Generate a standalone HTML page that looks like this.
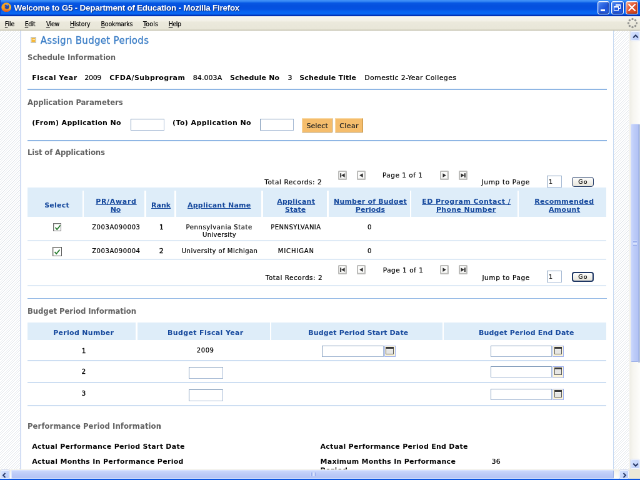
<!DOCTYPE html>
<html lang="en"><head><meta charset="utf-8"><title>Welcome to G5 - Department of Education - Mozilla Firefox</title>
<style>
html,body{margin:0;padding:0;background:#fff;overflow:hidden;}
body{width:640px;height:480px;position:relative;}
#w{position:absolute;left:0;top:0;width:1024px;height:768px;transform:scale(.625);transform-origin:0 0;font-family:"DejaVu Sans","Liberation Sans",sans-serif;font-size:11px;overflow:hidden;background:#fff;will-change:transform;}
.t{position:absolute;white-space:nowrap;line-height:16px;height:16px;}
.l{font-family:"Liberation Sans","DejaVu Sans",sans-serif;}
.c{font-family:"DejaVu Sans Condensed","DejaVu Sans","Liberation Sans",sans-serif;}
.n{-webkit-text-stroke:.22px currentColor;}
.m::first-letter{text-decoration:underline;}
.b{position:absolute;box-sizing:border-box;}
svg{position:absolute;overflow:visible;}
</style></head>
<body><div id="w">
<div class="b" style="left:48.5px;top:58.9px;width:9.3px;height:10.1px;background:#f6b83a;border:1.500px solid #a6c2ee;box-shadow:inset 0 0 0 1px #f8cf78;"><div class="b" style="left:2px;top:3px;width:4px;height:1.500px;background:#fdf0cf"></div></div>
<div class="b" style="left:44.0px;top:142.4px;width:926.9px;height:1.5px;background:#8fb6e4;"></div>
<div class="b" style="left:44.0px;top:224.0px;width:926.9px;height:1.5px;background:#8fb6e4;"></div>
<div class="b" style="left:44.0px;top:476.5px;width:926.9px;height:1.5px;background:#8fb6e4;"></div>
<div class="b" style="left:208.8px;top:190.1px;width:54.4px;height:18.9px;background:#fff;border:1.500px solid;border-color:#7d98b8 #a5b9d4 #a5b9d4 #7d98b8;"></div>
<div class="b" style="left:416.0px;top:190.1px;width:54.1px;height:18.9px;background:#fff;border:1.500px solid;border-color:#7d98b8 #a5b9d4 #a5b9d4 #7d98b8;"></div>
<div class="b" style="left:483.2px;top:189.1px;width:49.0px;height:23.0px;background:#f5bd6c;border:1.500px solid;border-color:#f9dba8 #b98a40 #b98a40 #f9dba8;"></div>
<div class="b" style="left:536.3px;top:189.1px;width:44.8px;height:23.0px;background:#f5bd6c;border:1.500px solid;border-color:#f9dba8 #b98a40 #b98a40 #f9dba8;"></div>
<div class="b" style="left:44.0px;top:299.8px;width:926.2px;height:47.0px;background:#deedf9;"></div>
<div class="b" style="left:132.2px;top:305.0px;width:2.2px;height:41.9px;background:#fff;"></div>
<div class="b" style="left:230.7px;top:305.0px;width:2.9px;height:41.9px;background:#fff;"></div>
<div class="b" style="left:279.0px;top:305.0px;width:2.6px;height:41.9px;background:#fff;"></div>
<div class="b" style="left:417.6px;top:305.0px;width:3.2px;height:41.9px;background:#fff;"></div>
<div class="b" style="left:523.2px;top:305.0px;width:2.6px;height:41.9px;background:#fff;"></div>
<div class="b" style="left:656.3px;top:305.0px;width:2.2px;height:41.9px;background:#fff;"></div>
<div class="b" style="left:828.2px;top:305.0px;width:2.2px;height:41.9px;background:#fff;"></div>
<div class="b" style="left:44.0px;top:384.2px;width:926.2px;height:2.2px;background:#deeaf6;"></div>
<div class="b" style="left:44.0px;top:414.2px;width:926.2px;height:2.2px;background:#deeaf6;"></div>
<div class="b" style="left:44.0px;top:455.8px;width:926.2px;height:2.2px;background:#deeaf6;"></div>
<div class="b" style="left:84.8px;top:356.8px;width:13.1px;height:13.1px;background:#fff;border:1px solid #6f6f6f;box-shadow:inset 1px 1px 0 #c9c9c2;"><svg style="left:1px;top:1px" width="11" height="11" viewBox="0 0 11 11"><path d="M1.500 5l2.700 3.200L9.500 1.500" fill="none" stroke="#1f7726" stroke-width="1.800"/></svg></div>
<div class="b" style="left:83.7px;top:395.0px;width:15.0px;height:15.0px;background:#fff;border:1.5px solid #585858;box-shadow:inset 1px 1px 0 #c9c9c2;"><svg style="left:1.5px;top:1.5px" width="11" height="11" viewBox="0 0 11 11"><path d="M1.500 5l2.700 3.200L9.500 1.500" fill="none" stroke="#1f7726" stroke-width="1.800"/></svg></div>
<div class="b" style="left:541.0px;top:272.6px;width:14.1px;height:15.2px;background:#fbfbfa;border:2px solid #bcbcba;border-radius:1.500px;box-shadow:inset -1px -1px 0 #e4e4e2;"><svg style="left:-2px;top:-2px" width="14" height="15" viewBox="0 0 14 15" fill="#2e2e2e"><path d="M3.200 4.200h1.900v6.800h-1.900z"/><path d="M10.600 4.200v6.800l-5.400-3.400z"/></svg></div>
<div class="b" style="left:571.2px;top:272.6px;width:14.1px;height:15.2px;background:#fbfbfa;border:2px solid #bcbcba;border-radius:1.500px;box-shadow:inset -1px -1px 0 #e4e4e2;"><svg style="left:-2px;top:-2px" width="14" height="15" viewBox="0 0 14 15" fill="#2e2e2e"><path d="M9.600 4.200v6.800l-5.400-3.400z"/></svg></div>
<div class="b" style="left:704.3px;top:272.6px;width:14.1px;height:15.2px;background:#fbfbfa;border:2px solid #bcbcba;border-radius:1.500px;box-shadow:inset -1px -1px 0 #e4e4e2;"><svg style="left:-2px;top:-2px" width="14" height="15" viewBox="0 0 14 15" fill="#2e2e2e"><path d="M4.400 4.200v6.800l5.400-3.400z"/></svg></div>
<div class="b" style="left:734.4px;top:272.6px;width:14.1px;height:15.2px;background:#fbfbfa;border:2px solid #bcbcba;border-radius:1.500px;box-shadow:inset -1px -1px 0 #e4e4e2;"><svg style="left:-2px;top:-2px" width="14" height="15" viewBox="0 0 14 15" fill="#2e2e2e"><path d="M3.400 4.200v6.800l5.400-3.400z"/><path d="M8.900 4.200h1.900v6.800h-1.900z"/></svg></div>
<div class="b" style="left:874.9px;top:281.3px;width:23.7px;height:18.9px;background:#fff;border:1.500px solid;border-color:#7d98b8 #a5b9d4 #a5b9d4 #7d98b8;"></div>
<div class="b" style="left:915.0px;top:282.9px;width:35.0px;height:16.2px;background:linear-gradient(#fefefd,#e6e4da);border:1.5px solid #1d3664;border-radius:4px;"></div>
<div class="b" style="left:541.0px;top:424.3px;width:14.1px;height:15.2px;background:#fbfbfa;border:2px solid #bcbcba;border-radius:1.500px;box-shadow:inset -1px -1px 0 #e4e4e2;"><svg style="left:-2px;top:-2px" width="14" height="15" viewBox="0 0 14 15" fill="#2e2e2e"><path d="M3.200 4.200h1.900v6.800h-1.900z"/><path d="M10.600 4.200v6.800l-5.400-3.400z"/></svg></div>
<div class="b" style="left:571.2px;top:424.3px;width:14.1px;height:15.2px;background:#fbfbfa;border:2px solid #bcbcba;border-radius:1.500px;box-shadow:inset -1px -1px 0 #e4e4e2;"><svg style="left:-2px;top:-2px" width="14" height="15" viewBox="0 0 14 15" fill="#2e2e2e"><path d="M9.600 4.200v6.800l-5.400-3.400z"/></svg></div>
<div class="b" style="left:704.3px;top:424.3px;width:14.1px;height:15.2px;background:#fbfbfa;border:2px solid #bcbcba;border-radius:1.500px;box-shadow:inset -1px -1px 0 #e4e4e2;"><svg style="left:-2px;top:-2px" width="14" height="15" viewBox="0 0 14 15" fill="#2e2e2e"><path d="M4.400 4.200v6.800l5.400-3.400z"/></svg></div>
<div class="b" style="left:734.4px;top:424.3px;width:14.1px;height:15.2px;background:#fbfbfa;border:2px solid #bcbcba;border-radius:1.500px;box-shadow:inset -1px -1px 0 #e4e4e2;"><svg style="left:-2px;top:-2px" width="14" height="15" viewBox="0 0 14 15" fill="#2e2e2e"><path d="M3.400 4.200v6.800l5.400-3.400z"/><path d="M8.900 4.200h1.900v6.800h-1.900z"/></svg></div>
<div class="b" style="left:874.9px;top:433.0px;width:23.7px;height:18.9px;background:#fff;border:1.500px solid;border-color:#7d98b8 #a5b9d4 #a5b9d4 #7d98b8;"></div>
<div class="b" style="left:915.0px;top:434.6px;width:35.0px;height:16.2px;background:linear-gradient(#fefefd,#e6e4da);border:2px solid #1d3664;border-radius:4px;"></div>
<div class="b" style="left:44.0px;top:515.8px;width:173.0px;height:27.8px;background:#deedf9;"></div>
<div class="b" style="left:219.5px;top:515.8px;width:212.5px;height:27.8px;background:#deedf9;"></div>
<div class="b" style="left:434.2px;top:515.8px;width:273.6px;height:27.8px;background:#deedf9;"></div>
<div class="b" style="left:710.4px;top:515.8px;width:259.8px;height:27.8px;background:#deedf9;"></div>
<div class="b" style="left:44.0px;top:576.0px;width:926.2px;height:1.8px;background:#cddef2;"></div>
<div class="b" style="left:44.0px;top:610.9px;width:926.2px;height:1.8px;background:#cddef2;"></div>
<div class="b" style="left:44.0px;top:648.2px;width:926.2px;height:1.8px;background:#cddef2;"></div>
<div class="b" style="left:302.1px;top:587.2px;width:54.7px;height:18.9px;background:#fff;border:1.500px solid;border-color:#7d98b8 #a5b9d4 #a5b9d4 #7d98b8;"></div>
<div class="b" style="left:302.1px;top:622.9px;width:54.7px;height:19.0px;background:#fff;border:1.500px solid;border-color:#7d98b8 #a5b9d4 #a5b9d4 #7d98b8;"></div>
<div class="b" style="left:515.2px;top:552.8px;width:98.9px;height:18.2px;background:#fff;border:1.500px solid;border-color:#7d98b8 #a5b9d4 #a5b9d4 #7d98b8;"></div>
<div class="b" style="left:614.9px;top:552.8px;width:18.2px;height:18.4px;background:#fbf4d9;border:1.500px solid #9db0ee;"><div class="b" style="left:1.500px;top:1px;width:12.500px;height:3px;background:#3a3a3a"></div><div class="b" style="left:1.500px;top:4px;width:12.500px;height:9px;background:#e6e6e4;border:1.500px solid #5a5a5a;border-top:0;box-shadow:inset 0 1px 0 #fff"></div></div>
<div class="b" style="left:784.5px;top:552.6px;width:98.7px;height:18.2px;background:#fff;border:1.500px solid;border-color:#7d98b8 #a5b9d4 #a5b9d4 #7d98b8;"></div>
<div class="b" style="left:884.2px;top:552.6px;width:18.2px;height:18.4px;background:#fbf4d9;border:1.500px solid #9db0ee;"><div class="b" style="left:1.500px;top:1px;width:12.500px;height:3px;background:#3a3a3a"></div><div class="b" style="left:1.500px;top:4px;width:12.500px;height:9px;background:#e6e6e4;border:1.500px solid #5a5a5a;border-top:0;box-shadow:inset 0 1px 0 #fff"></div></div>
<div class="b" style="left:784.5px;top:586.2px;width:98.7px;height:18.2px;background:#fff;border:1.500px solid;border-color:#7d98b8 #a5b9d4 #a5b9d4 #7d98b8;"></div>
<div class="b" style="left:884.2px;top:586.2px;width:18.2px;height:18.4px;background:#fbf4d9;border:1.500px solid #9db0ee;"><div class="b" style="left:1.500px;top:1px;width:12.500px;height:3px;background:#3a3a3a"></div><div class="b" style="left:1.500px;top:4px;width:12.500px;height:9px;background:#e6e6e4;border:1.500px solid #5a5a5a;border-top:0;box-shadow:inset 0 1px 0 #fff"></div></div>
<div class="b" style="left:784.5px;top:622.1px;width:98.7px;height:18.2px;background:#fff;border:1.500px solid;border-color:#7d98b8 #a5b9d4 #a5b9d4 #7d98b8;"></div>
<div class="b" style="left:884.2px;top:622.1px;width:18.2px;height:18.4px;background:#fbf4d9;border:1.500px solid #9db0ee;"><div class="b" style="left:1.500px;top:1px;width:12.500px;height:3px;background:#3a3a3a"></div><div class="b" style="left:1.500px;top:4px;width:12.500px;height:9px;background:#e6e6e4;border:1.500px solid #5a5a5a;border-top:0;box-shadow:inset 0 1px 0 #fff"></div></div>
<span class="t" style="left:64.8px;top:57.3px;font-size:15px;color:#3a7dc6;letter-spacing:0.30px;-webkit-text-stroke:.3px #3a7dc6;">Assign Budget Periods</span>
<span class="t c" style="left:44.0px;top:84.0px;font-size:13px;color:#636363;font-weight:bold;letter-spacing:-0.04px;">Schedule Information</span>
<span class="t" style="left:51.2px;top:116.5px;font-size:11px;color:#000;font-weight:bold;letter-spacing:0.54px;">Fiscal Year</span>
<span class="t n" style="left:135.2px;top:116.5px;font-size:11px;color:#000;letter-spacing:-0.27px;">2009</span>
<span class="t" style="left:175.2px;top:116.5px;font-size:11px;color:#000;font-weight:bold;letter-spacing:0.49px;">CFDA/Subprogram</span>
<span class="t n" style="left:308.8px;top:116.5px;font-size:11px;color:#000;letter-spacing:0.06px;">84.003A</span>
<span class="t" style="left:368.0px;top:116.5px;font-size:11px;color:#000;font-weight:bold;letter-spacing:0.19px;">Schedule No</span>
<span class="t n" style="left:460.5px;top:116.5px;font-size:11px;color:#000;">3</span>
<span class="t" style="left:479.2px;top:116.5px;font-size:11px;color:#000;font-weight:bold;letter-spacing:0.19px;">Schedule Title</span>
<span class="t n" style="left:583.2px;top:116.5px;font-size:11px;color:#000;letter-spacing:0.36px;">Domestic 2-Year Colleges</span>
<span class="t c" style="left:44.0px;top:156.2px;font-size:13px;color:#636363;font-weight:bold;letter-spacing:-0.10px;">Application Parameters</span>
<span class="t" style="left:51.2px;top:189.0px;font-size:11px;color:#000;font-weight:bold;letter-spacing:0.32px;">(From) Application No</span>
<span class="t" style="left:276.0px;top:189.0px;font-size:11px;color:#000;font-weight:bold;letter-spacing:0.41px;">(To) Application No</span>
<span class="t n" style="left:490.4px;top:193.8px;font-size:11px;color:#222;letter-spacing:0.09px;">Select</span>
<span class="t n" style="left:543.2px;top:193.8px;font-size:11px;color:#222;letter-spacing:0.40px;">Clear</span>
<span class="t c" style="left:44.0px;top:236.2px;font-size:13px;color:#636363;font-weight:bold;letter-spacing:-0.15px;">List of Applications</span>
<span class="t n" style="left:423.2px;top:283.4px;font-size:10.5px;color:#000;letter-spacing:0.56px;">Total Records: 2</span>
<span class="t n" style="left:612.0px;top:272.0px;font-size:10.5px;color:#000;letter-spacing:0.51px;">Page 1 of 1</span>
<span class="t n" style="left:770.6px;top:283.4px;font-size:10.5px;color:#000;letter-spacing:0.67px;">Jump to Page</span>
<span class="t n" style="left:878.1px;top:282.9px;font-size:9.5px;color:#000;">1</span>
<span class="t n" style="left:925.3px;top:283.2px;font-size:9.5px;color:#000;letter-spacing:1.05px;">Go</span>
<span class="t n" style="left:424.8px;top:435.8px;font-size:10.5px;color:#000;letter-spacing:0.51px;">Total Records: 2</span>
<span class="t n" style="left:612.8px;top:423.7px;font-size:10.5px;color:#000;letter-spacing:0.51px;">Page 1 of 1</span>
<span class="t n" style="left:771.4px;top:435.8px;font-size:10.5px;color:#000;letter-spacing:0.60px;">Jump to Page</span>
<span class="t n" style="left:878.1px;top:434.6px;font-size:9.5px;color:#000;">1</span>
<span class="t n" style="left:925.3px;top:434.9px;font-size:9.5px;color:#000;letter-spacing:1.05px;">Go</span>
<span class="t" style="left:71.2px;top:321.0px;font-size:11px;color:#14479c;font-weight:bold;letter-spacing:0.24px;">Select</span>
<span class="t" style="left:153.2px;top:314.9px;font-size:11px;color:#14479c;font-weight:bold;letter-spacing:0.69px;text-decoration:underline;">PR/Award</span>
<span class="t" style="left:176.8px;top:327.8px;font-size:11px;color:#14479c;font-weight:bold;letter-spacing:-0.37px;text-decoration:underline;">No</span>
<span class="t" style="left:242.0px;top:321.0px;font-size:11px;color:#14479c;font-weight:bold;letter-spacing:0.05px;text-decoration:underline;">Rank</span>
<span class="t" style="left:300.0px;top:321.0px;font-size:11px;color:#14479c;font-weight:bold;letter-spacing:0.23px;text-decoration:underline;">Applicant Name</span>
<span class="t" style="left:443.2px;top:314.9px;font-size:11px;color:#14479c;font-weight:bold;letter-spacing:0.24px;text-decoration:underline;">Applicant</span>
<span class="t" style="left:456.0px;top:327.8px;font-size:11px;color:#14479c;font-weight:bold;letter-spacing:-0.03px;text-decoration:underline;">State</span>
<span class="t" style="left:534.0px;top:314.9px;font-size:11px;color:#14479c;font-weight:bold;letter-spacing:0.19px;text-decoration:underline;">Number of Budget</span>
<span class="t" style="left:568.8px;top:327.8px;font-size:11px;color:#14479c;font-weight:bold;letter-spacing:0.08px;text-decoration:underline;">Periods</span>
<span class="t" style="left:675.2px;top:314.9px;font-size:11px;color:#14479c;font-weight:bold;letter-spacing:0.44px;text-decoration:underline;">ED Program Contact /</span>
<span class="t" style="left:698.0px;top:327.8px;font-size:11px;color:#14479c;font-weight:bold;letter-spacing:0.31px;text-decoration:underline;">Phone Number</span>
<span class="t" style="left:855.2px;top:314.9px;font-size:11px;color:#14479c;font-weight:bold;letter-spacing:0.34px;text-decoration:underline;">Recommended</span>
<span class="t" style="left:878.0px;top:327.8px;font-size:11px;color:#14479c;font-weight:bold;letter-spacing:0.31px;text-decoration:underline;">Amount</span>
<span class="t n" style="left:147.2px;top:356.2px;font-size:10px;color:#000;letter-spacing:0.58px;">Z003A090003</span>
<span class="t n" style="left:254.9px;top:355.4px;font-size:10.5px;color:#000;-webkit-text-stroke:.4px #000;">1</span>
<span class="t n" style="left:297.6px;top:355.8px;font-size:10px;color:#000;letter-spacing:0.60px;">Pennsylvania State</span>
<span class="t n" style="left:324.0px;top:367.8px;font-size:10px;color:#000;letter-spacing:0.35px;">University</span>
<span class="t n" style="left:433.2px;top:356.2px;font-size:10px;color:#000;letter-spacing:0.49px;">PENNSYLVANIA</span>
<span class="t n" style="left:588.0px;top:356.2px;font-size:10px;color:#000;">0</span>
<span class="t n" style="left:147.2px;top:394.2px;font-size:10px;color:#000;letter-spacing:0.58px;">Z003A090004</span>
<span class="t n" style="left:254.9px;top:393.4px;font-size:10.5px;color:#000;-webkit-text-stroke:.4px #000;">2</span>
<span class="t n" style="left:290.8px;top:394.2px;font-size:10px;color:#000;letter-spacing:0.47px;">University of Michigan</span>
<span class="t n" style="left:444.8px;top:394.2px;font-size:10px;color:#000;letter-spacing:0.87px;">MICHIGAN</span>
<span class="t n" style="left:588.0px;top:394.2px;font-size:10px;color:#000;">0</span>
<span class="t c" style="left:44.0px;top:490.2px;font-size:13px;color:#636363;font-weight:bold;letter-spacing:-0.08px;">Budget Period Information</span>
<span class="t" style="left:85.2px;top:525.0px;font-size:11px;color:#14479c;font-weight:bold;letter-spacing:0.30px;">Period Number</span>
<span class="t" style="left:268.0px;top:525.0px;font-size:11px;color:#14479c;font-weight:bold;letter-spacing:0.36px;">Budget Fiscal Year</span>
<span class="t" style="left:493.2px;top:525.0px;font-size:11px;color:#14479c;font-weight:bold;letter-spacing:0.14px;">Budget Period Start Date</span>
<span class="t" style="left:766.0px;top:525.0px;font-size:11px;color:#14479c;font-weight:bold;letter-spacing:0.17px;">Budget Period End Date</span>
<span class="t n" style="left:130.7px;top:552.6px;font-size:10.5px;color:#000;-webkit-text-stroke:.4px #000;">1</span>
<span class="t n" style="left:130.4px;top:585.8px;font-size:10.5px;color:#000;-webkit-text-stroke:.4px #000;">2</span>
<span class="t n" style="left:130.4px;top:621.0px;font-size:10.5px;color:#000;-webkit-text-stroke:.4px #000;">3</span>
<span class="t n" style="left:314.8px;top:553.0px;font-size:10px;color:#000;letter-spacing:0.58px;">2009</span>
<span class="t c" style="left:44.0px;top:674.2px;font-size:13px;color:#636363;font-weight:bold;letter-spacing:0.04px;">Performance Period Information</span>
<span class="t" style="left:51.2px;top:707.4px;font-size:11px;color:#000;font-weight:bold;letter-spacing:0.27px;">Actual Performance Period Start Date</span>
<span class="t" style="left:51.2px;top:731.4px;font-size:11px;color:#000;font-weight:bold;letter-spacing:0.30px;">Actual Months In Performance Period</span>
<span class="t" style="left:512.5px;top:707.4px;font-size:11px;color:#000;font-weight:bold;letter-spacing:0.28px;">Actual Performance Period End Date</span>
<span class="t" style="left:512.5px;top:731.4px;font-size:11px;color:#000;font-weight:bold;letter-spacing:0.27px;">Maximum Months In Performance</span>
<span class="t" style="left:512.5px;top:745.3px;font-size:11px;color:#000;font-weight:bold;letter-spacing:0.67px;">Period</span>
<span class="t n" style="left:786.4px;top:731.4px;font-size:11px;color:#000;letter-spacing:0.40px;">36</span>
<div class="b" style="left:0.0px;top:0.0px;width:1024.0px;height:26.1px;background:linear-gradient(#3f90f7 0%,#3a8bf5 7%,#1a6eec 13%,#0756e2 21%,#0450de 36%,#0452e2 58%,#0760ee 67%,#0868f4 84%,#0659e4 89%,#0232b6 94%,#0232b6 100%);"></div>
<div class="b" style="left:0.0px;top:0.0px;width:1.1px;height:26.1px;background:#0b3fc4;"></div>
<svg style="left:1.9px;top:3.7px" width="16.3" height="15.4" viewBox="0 0 16 15"><defs><linearGradient id="fx" x1="0" y1="0" x2="1" y2="1"><stop offset="0" stop-color="#f59a1e"/><stop offset=".45" stop-color="#f6a623"/><stop offset=".75" stop-color="#f4c23a"/><stop offset="1" stop-color="#e8b030"/></linearGradient><linearGradient id="fb" x1="0" y1="0" x2="0" y2="1"><stop offset=".55" stop-color="#e6541c" stop-opacity="0"/><stop offset="1" stop-color="#d8401a"/></linearGradient></defs><ellipse cx="8" cy="7.500" rx="7.700" ry="7.200" fill="url(#fx)"/><ellipse cx="8" cy="7.500" rx="7.700" ry="7.200" fill="url(#fb)"/><circle cx="8.800" cy="6.600" r="3.700" fill="#2448a8"/><path d="M7 3.200a3.700 3.700 0 0 1 4.600 1.200c-1-.3-1.800 0-2.400.8-.8-.9-1.600-1.500-2.200-2z" fill="#6fa0ea"/><path d="M4.800 6.200c.6-.5 1.400-.7 2.300-.5-1 .6-1.400 1.500-1.200 2.500.3 1.300 1.500 2.200 3 2.300 1.300.1 2.500-.5 3.300-1.500-.4 2-2.200 3.300-4.300 3.200-2.200-.1-3.900-1.700-4-3.700 0-.9.300-1.700.9-2.300z" fill="#f08a1e"/></svg>
<div class="b" style="left:955.7px;top:2.4px;width:19.2px;height:21.0px;background:linear-gradient(135deg,#4a86f2,#1d52d8 60%,#2a63e4);border:1px solid #fff;border-radius:3px;box-shadow:inset -1px -1px 2px rgba(0,0,40,.35),inset 1px 1px 2px rgba(255,255,255,.35);"><div class="b" style="left:4px;top:12px;width:7px;height:3px;background:#fff"></div></div>
<div class="b" style="left:978.4px;top:2.4px;width:19.4px;height:21.0px;background:linear-gradient(135deg,#4a86f2,#1d52d8 60%,#2a63e4);border:1px solid #fff;border-radius:3px;box-shadow:inset -1px -1px 2px rgba(0,0,40,.35),inset 1px 1px 2px rgba(255,255,255,.35);"><div class="b" style="left:6px;top:4px;width:8px;height:7px;border:1px solid #fff;border-top-width:2px"></div><div class="b" style="left:3px;top:7px;width:8px;height:7px;border:1px solid #fff;border-top-width:2px;background:#2459dc"></div></div>
<div class="b" style="left:1001.3px;top:2.4px;width:20.2px;height:21.0px;background:linear-gradient(135deg,#f2a486,#e25530 45%,#cf3f16);border:1px solid #fff;border-radius:3px;box-shadow:inset -1px -1px 2px rgba(0,0,40,.35),inset 1px 1px 2px rgba(255,255,255,.35);"><svg style="left:3px;top:3px" width="12" height="12" viewBox="0 0 12 12"><path d="M1.500 1.500l9 9M10.500 1.500l-9 9" stroke="#fff" stroke-width="2.200" stroke-linecap="square"/></svg></div>
<div class="b" style="left:0.0px;top:26.1px;width:1024.0px;height:23.4px;background:linear-gradient(#f7f6f0 0%,#f3f1e8 30%,#ebe9dc 42%,#e8e6d8 90%,#cbc8b6 96%,#c2bfac 100%);"></div>
<svg style="left:1003.5px;top:29.1px" width="16.0" height="16.0" viewBox="0 0 16 16"><circle cx="14.50" cy="8.00" r="1.750" fill="#969692"/><circle cx="12.60" cy="12.60" r="1.750" fill="#969692"/><circle cx="8.00" cy="14.50" r="1.750" fill="#969692"/><circle cx="3.40" cy="12.60" r="1.750" fill="#969692"/><circle cx="1.50" cy="8.00" r="1.750" fill="#969692"/><circle cx="3.40" cy="3.40" r="1.750" fill="#969692"/><circle cx="8.00" cy="1.50" r="1.750" fill="#969692"/><circle cx="12.60" cy="3.40" r="1.750" fill="#969692"/></svg>
<div class="b" style="left:32.3px;top:49.4px;width:1.3px;height:701.4px;background:#d3def4;"></div>
<div class="b" style="left:981.3px;top:49.4px;width:1.3px;height:701.4px;background:#c9dbf2;"></div>
<div class="b" style="left:1007.0px;top:49.4px;width:17.0px;height:701.4px;background:linear-gradient(90deg,#eeede5,#f7f6f1 40%,#fdfdfb);"></div>
<div class="b" style="left:1008.8px;top:49.6px;width:14.6px;height:15.2px;background:linear-gradient(135deg,#d6e2fe,#b9cbf8);border:1px solid #f4f7ff;border-radius:2px;box-shadow:0 0 0 .5px #b4c4ee;"><svg style="left:2px;top:3px" width="10" height="8" viewBox="0 0 10 8"><path d="M1.200 6.200L5 2.400 8.800 6.200" fill="none" stroke="#22325f" stroke-width="2"/></svg></div>
<div class="b" style="left:1008.8px;top:734.7px;width:13.9px;height:15.4px;background:linear-gradient(135deg,#d6e2fe,#b9cbf8);border:1px solid #f4f7ff;border-radius:2px;box-shadow:0 0 0 .5px #b4c4ee;"><svg style="left:2px;top:4px" width="10" height="8" viewBox="0 0 10 8"><path d="M1.200 1.800L5 5.600 8.800 1.800" fill="none" stroke="#22325f" stroke-width="2"/></svg></div>
<div class="b" style="left:1021.1px;top:199.0px;width:2.9px;height:381.1px;background:#b1bfdc;"></div>
<div class="b" style="left:1008.6px;top:198.1px;width:13.0px;height:381.4px;background:linear-gradient(90deg,#cad7fc,#bccbf8 45%,#b3c3f5);border:1px solid #dbe5ff;border-right-color:#a3b6ec;border-bottom-color:#9db0e8;border-radius:2px;"><div class="b" style="left:3px;top:186px;width:6px;height:8px;background:repeating-linear-gradient(#e2eaff 0,#e2eaff 1px,#94a9ec 1px,#94a9ec 2px);"></div></div>
<div class="b" style="left:0.0px;top:750.9px;width:1007.0px;height:14.9px;background:linear-gradient(#eeede5,#f7f6f1 40%,#fdfdfb);"></div>
<div class="b" style="left:1007.0px;top:750.9px;width:17.0px;height:14.9px;background:#ece9d8;"></div>
<div class="b" style="left:0.5px;top:751.7px;width:14.7px;height:14.7px;background:linear-gradient(135deg,#d6e2fe,#b9cbf8);border:1px solid #f4f7ff;border-radius:2px;box-shadow:0 0 0 .5px #b4c4ee;"><svg style="left:1.500px;top:3px" width="7" height="9" viewBox="0 0 7 9"><path d="M5.500 1L2 4.500 5.500 8" fill="none" stroke="#2a3b68" stroke-width="1.900"/></svg></div>
<div class="b" style="left:990.9px;top:751.7px;width:14.7px;height:14.7px;background:linear-gradient(135deg,#d6e2fe,#b9cbf8);border:1px solid #f4f7ff;border-radius:2px;box-shadow:0 0 0 .5px #b4c4ee;"><svg style="left:4px;top:3px" width="7" height="9" viewBox="0 0 7 9"><path d="M1.500 1L5 4.500 1.500 8" fill="none" stroke="#2a3b68" stroke-width="1.900"/></svg></div>
<div class="b" style="left:17.6px;top:751.8px;width:964.2px;height:14.6px;background:linear-gradient(#cad7fc,#bccbf8 45%,#b3c3f5);border:1px solid #dbe5ff;border-right-color:#98aee6;border-radius:2px;"><div class="b" style="left:478px;top:3px;width:8px;height:6px;background:repeating-linear-gradient(90deg,#e2eaff 0,#e2eaff 1px,#94a9ec 1px,#94a9ec 2px);"></div></div>
<div class="b" style="left:0.0px;top:765.8px;width:1024.0px;height:2.2px;background:#0b55e0;"></div>
<span class="t l" style="left:22.4px;top:5.0px;font-size:13.5px;color:#fff;font-weight:bold;letter-spacing:-0.26px;text-shadow:1px 1px 1px #0a246a;">Welcome to G5 - Department of Education - Mozilla Firefox</span>
<span class="t c n m" style="left:7.8px;top:29.6px;font-size:10.5px;color:#000;letter-spacing:-0.08px;">File</span>
<span class="t c n m" style="left:39.7px;top:29.6px;font-size:10.5px;color:#000;letter-spacing:-0.39px;">Edit</span>
<span class="t c n m" style="left:73.9px;top:29.6px;font-size:10.5px;color:#000;letter-spacing:-0.32px;">View</span>
<span class="t c n m" style="left:112.0px;top:29.6px;font-size:10.5px;color:#000;letter-spacing:-0.16px;">History</span>
<span class="t c n m" style="left:161.6px;top:29.6px;font-size:10.5px;color:#000;letter-spacing:-0.24px;">Bookmarks</span>
<span class="t c n m" style="left:229.1px;top:29.6px;font-size:10.5px;color:#000;letter-spacing:0.19px;">Tools</span>
<span class="t c n m" style="left:269.8px;top:29.6px;font-size:10.5px;color:#000;letter-spacing:-0.46px;">Help</span>
</div>
<div class="b" style="left:0.0px;top:30.9px;width:20.3px;height:438.4px;background:repeating-linear-gradient(135deg,#ffffff 0,#ffffff .350px,#e4e8ed .885px,#ffffff 1.420px,#ffffff 1.770px);"></div>
<div class="b" style="left:614.1px;top:30.9px;width:15.3px;height:438.4px;background:repeating-linear-gradient(135deg,#ffffff 0,#ffffff .350px,#e4e8ed .885px,#ffffff 1.420px,#ffffff 1.770px);"></div>
</body></html>
